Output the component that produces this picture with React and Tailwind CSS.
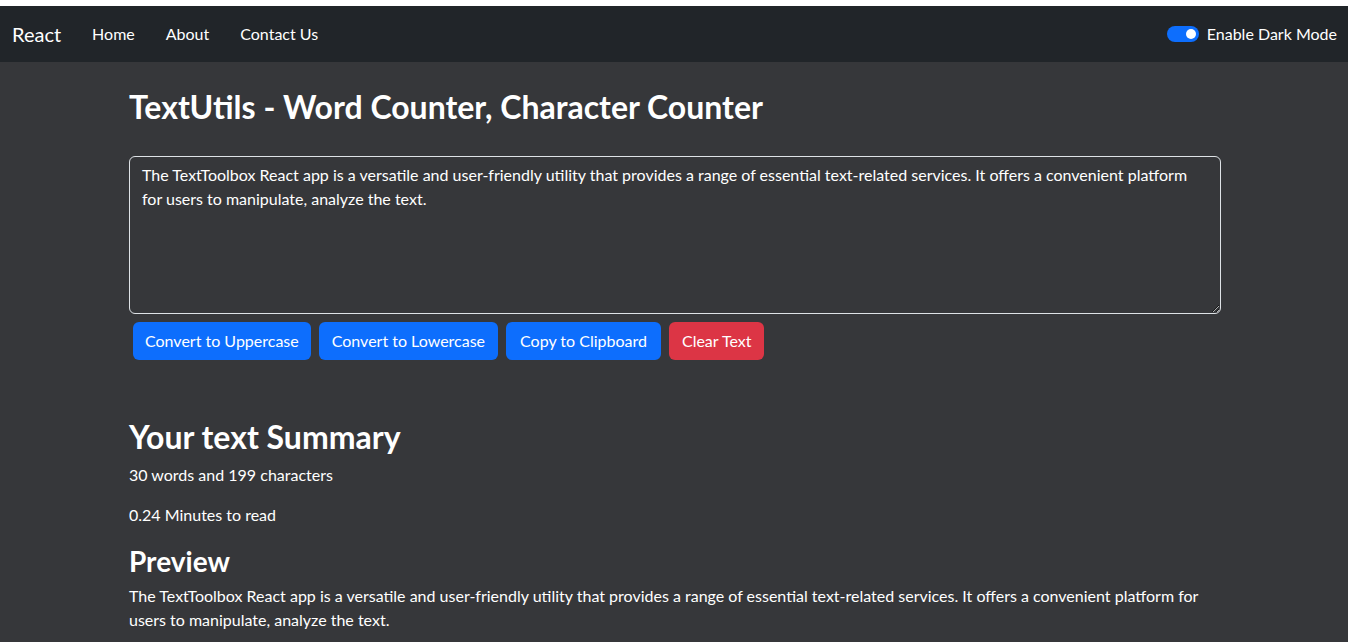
import { useState } from 'react';

const initial =
  'The TextToolbox React app is a versatile and user-friendly utility that provides a range of essential text-related services. It offers a convenient platform for users to manipulate, analyze the text.';

export default function App() {
  const [text, setText] = useState(initial);
  const words = text.split(/\s+/).filter(w => w.length > 0).length;

  return (
    <div className="min-h-screen bg-white pt-[6px] text-white" style={{ fontFamily: 'Lato, "Open Sans", sans-serif' }}>
      <nav className="h-[56px] bg-[#212529] flex items-center px-3">
        <span className="text-[20px] mr-[31px] text-white">React</span>
        <ul className="flex items-center text-[16px]">
          <li className="mr-[31px]">Home</li>
          <li className="mr-[31px]">About</li>
          <li>Contact Us</li>
        </ul>
        <div className="ml-auto flex items-center gap-2 mr-[-1px]">
          <span className="w-[32px] h-[16px] rounded-full bg-[#0d6efd] flex items-center justify-end pr-[3px]">
            <span className="w-[10px] h-[10px] rounded-full bg-white" />
          </span>
          <span className="text-[16px]">Enable Dark Mode</span>
        </div>
      </nav>

      <main className="bg-[#36373a] min-h-[580px] pl-[129px] pr-[127px] pt-[26px] pb-8">
        <h1 className="text-[32px] leading-[38px] font-bold mb-[30px]">TextUtils - Word Counter, Character Counter</h1>
        <textarea
          value={text}
          onChange={e => setText(e.target.value)}
          rows={6}
          className="block w-full h-[158px] bg-transparent border border-[#dee2e6] rounded-[6px] px-3 py-[6px] text-[16px] leading-[24px] text-white outline-none"
        />
        <div className="flex gap-2 mt-[8px] pl-1">
          <button className="bg-[#0d6efd] rounded-[6px] px-3 py-[7px] text-[16px] leading-[24px]">Convert to Uppercase</button>
          <button className="bg-[#0d6efd] rounded-[6px] px-[13px] py-[7px] text-[16px] leading-[24px]">Convert to Lowercase</button>
          <button className="bg-[#0d6efd] rounded-[6px] px-[14px] py-[7px] text-[16px] leading-[24px]">Copy to Clipboard</button>
          <button className="bg-[#dc3545] rounded-[6px] px-[13px] py-[7px] text-[16px] leading-[24px]">Clear Text</button>
        </div>

        <h2 className="text-[32px] leading-[38px] font-bold mt-[58px] mb-[7px]">Your text Summary</h2>
        <p className="text-[16px] leading-[24px] mb-4">{words} words and {text.length} characters</p>
        <p className="text-[16px] leading-[24px] mb-[17px]">{(0.008 * words).toFixed(2)} Minutes to read</p>
        <h3 className="text-[28px] leading-[34px] font-bold mb-[6px]">Preview</h3>
        <p className="text-[16px] leading-[24px] pr-[10px]">{text}</p>
      </main>
    </div>
  );
}
